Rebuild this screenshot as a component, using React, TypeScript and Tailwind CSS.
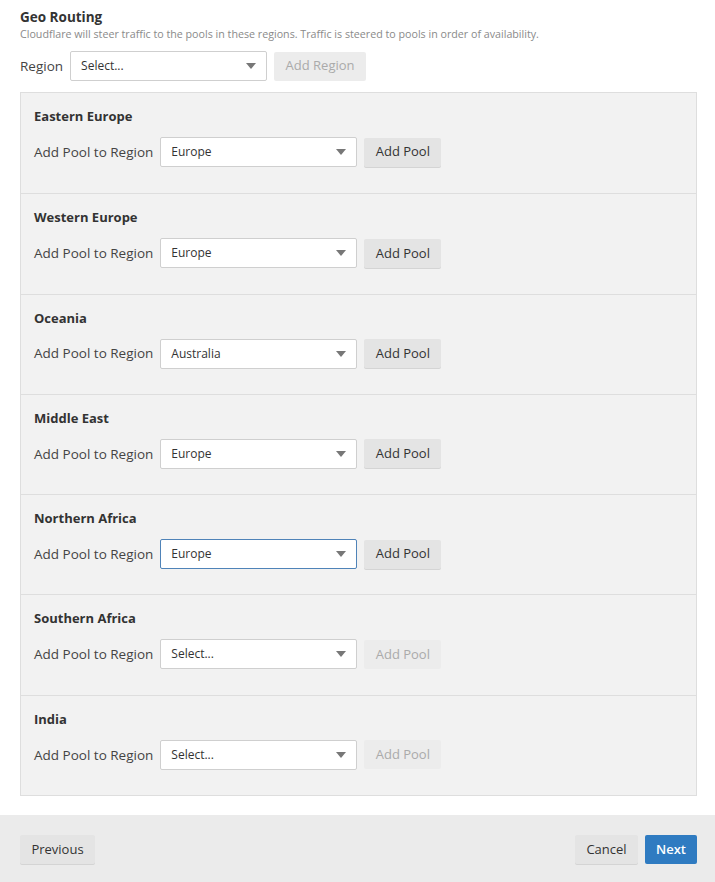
import React from 'react'

interface Region {
  name: string
  pool: string
  focused?: boolean
}

const regions: Region[] = [
  { name: 'Eastern Europe', pool: 'Europe' },
  { name: 'Western Europe', pool: 'Europe' },
  { name: 'Oceania', pool: 'Australia' },
  { name: 'Middle East', pool: 'Europe' },
  { name: 'Northern Africa', pool: 'Europe', focused: true },
  { name: 'Southern Africa', pool: '' },
  { name: 'India', pool: '' },
]

function Caret() {
  return (
    <svg width="10" height="6" viewBox="0 0 10 6" className="shrink-0">
      <path d="M0 0h10L5 6z" fill="#777" />
    </svg>
  )
}

function Select({ value, focused }: { value: string; focused?: boolean }) {
  return (
    <div
      className={`flex h-[30px] w-[197px] items-center justify-between rounded-[2px] border bg-white pl-[10px] pr-[10px] text-[12px] text-[#333] ${
        focused ? 'border-[#4f83b8]' : 'border-[#cfcfcf]'
      }`}
    >
      <span>{value || 'Select...'}</span>
      <Caret />
    </div>
  )
}

function Button({
  children,
  disabled,
  className = '',
}: {
  children: React.ReactNode
  disabled?: boolean
  className?: string
}) {
  return (
    <button
      className={`h-[29px] rounded-[2px] text-[13px] ${
        disabled ? 'bg-[#ececec] text-[#aaa]' : 'bg-[#e4e4e4] text-[#333] shadow-[0_1px_0_#d4d4d4]'
      } ${className}`}
    >
      {children}
    </button>
  )
}

export default function App() {
  return (
    <div
      className="min-h-[882px] w-[715px] bg-white text-[#333]"
      style={{ fontFamily: '"Open Sans", "Noto Sans", sans-serif' }}
    >
      <div className="pl-5 pr-[18px] pt-[7px]">
        <h2 className="text-[13.5px] font-bold leading-[20px] text-[#333]">Geo Routing</h2>
        <p className="text-[10.7px] leading-[14px] text-[#8a8a8a]">
          Cloudflare will steer traffic to the pools in these regions. Traffic is steered to pools in order of
          availability.
        </p>
        <div className="mt-[10px] flex items-center">
          <span className="mr-[7px] text-[13.5px] text-[#444]">Region</span>
          <Select value="" />
          <Button disabled className="ml-[7px] w-[92px]">
            Add Region
          </Button>
        </div>

        <div className="mt-[11px] border border-[#dedede] bg-[#f2f2f2]">
          {regions.map((r, i) => (
            <div
              key={r.name}
              className={`h-[100.3px] px-[13px] pt-[14px] ${i > 0 ? 'border-t border-[#dedede]' : ''}`}
            >
              <div className="text-[13px] font-bold leading-[18px] text-[#333]">{r.name}</div>
              <div className="mt-[12px] flex items-center">
                <span className="mr-[7px] text-[13.5px] text-[#444]">Add Pool to Region</span>
                <Select value={r.pool} focused={r.focused} />
                <Button disabled={!r.pool} className="ml-[7px] w-[77px]">
                  Add Pool
                </Button>
              </div>
            </div>
          ))}
        </div>
      </div>

      <div className="mt-[19px] flex h-[67px] items-start justify-between bg-[#ebebeb] pl-5 pr-[18px] pt-[20px]">
        <Button className="w-[75px]">Previous</Button>
        <div className="flex gap-[7px]">
          <Button className="w-[63px]">Cancel</Button>
          <button className="h-[29px] w-[52px] rounded-[2px] bg-[#2f7bc1] text-[13px] font-semibold text-white">
            Next
          </button>
        </div>
      </div>
    </div>
  )
}
